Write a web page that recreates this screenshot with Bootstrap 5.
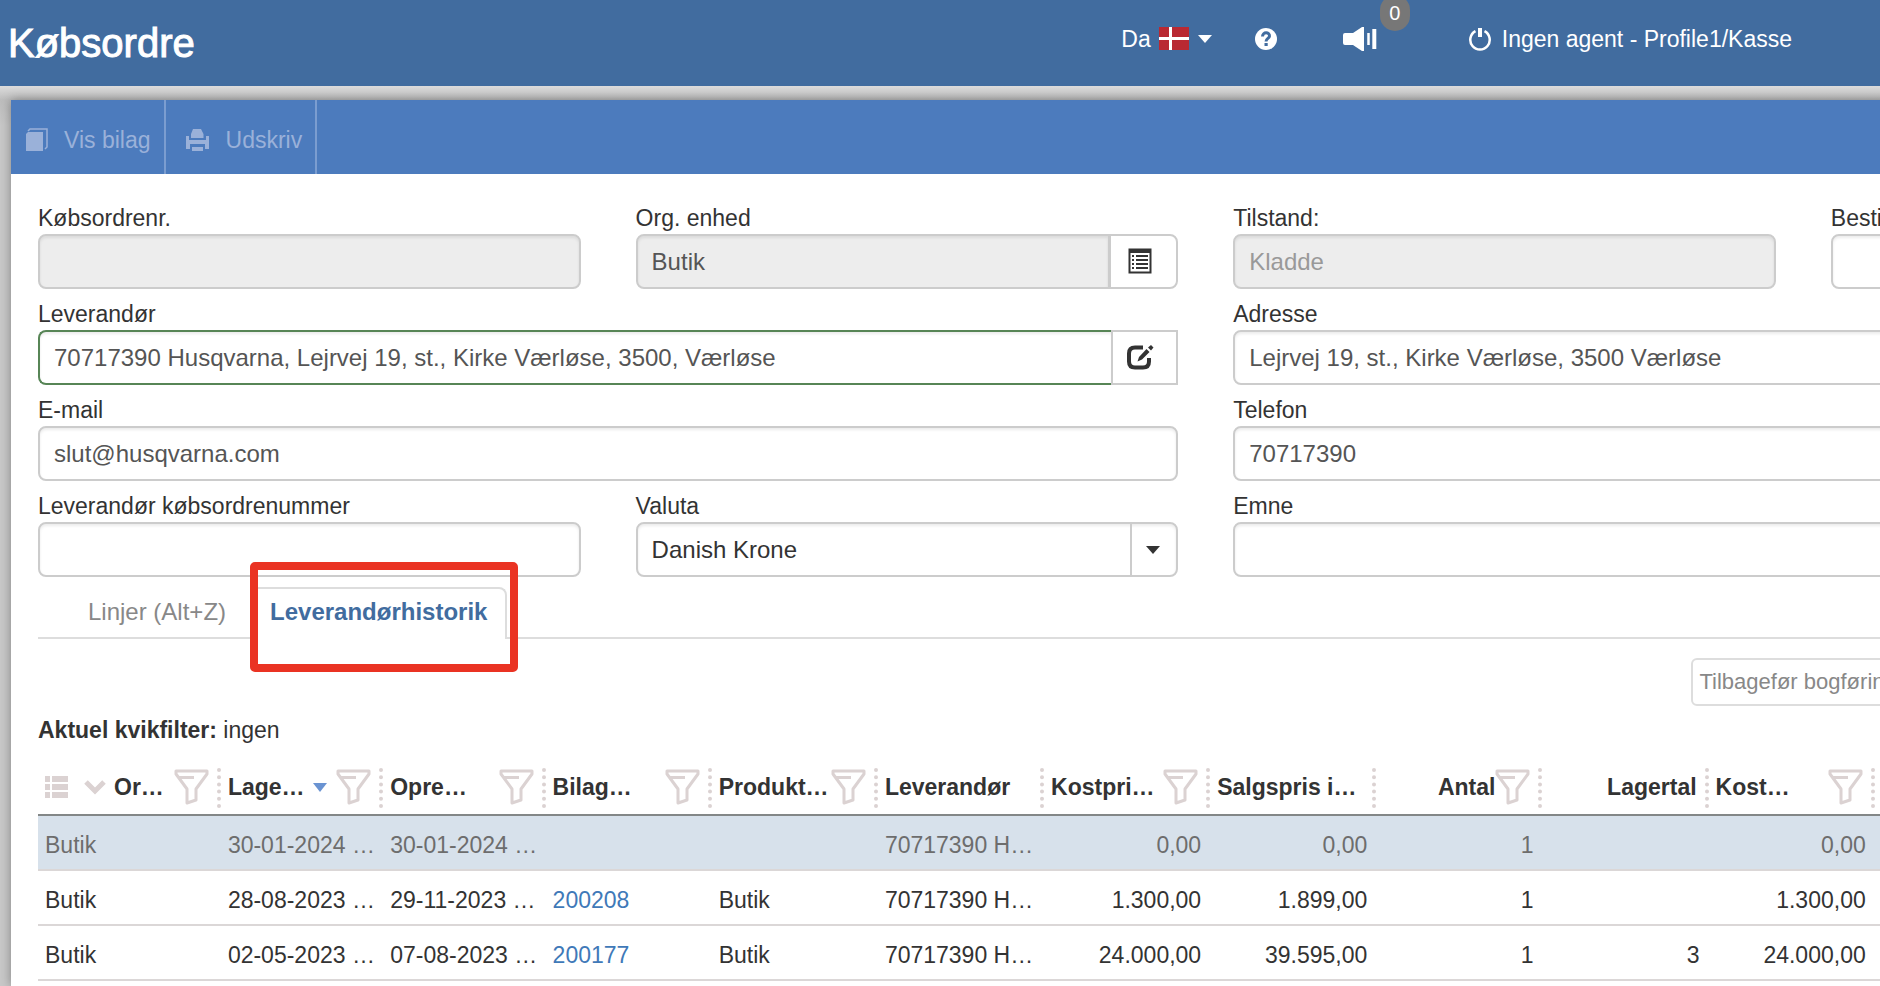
<!DOCTYPE html>
<html lang="da">
<head>
<meta charset="utf-8">
<meta name="viewport" content="width=device-width, initial-scale=1">
<title>Købsordre</title>
<link rel="stylesheet" href="https://cdn.jsdelivr.net/npm/bootstrap@5.3.0/dist/css/bootstrap.min.css">
<style>
  body { font-family: "Liberation Sans", Arial, sans-serif; font-size: 23px; line-height: 28px; color: #333; background: #c8c8c8; overflow-x: hidden; }
  .topbar { background: #416c9f; height: 86px; color: #fff; }
  .topbar a { color: #fff; text-decoration: none; }
  .page-title { font-size: 40px; line-height: 48px; -webkit-text-stroke: 1px #fff; }
  .top-links { margin-right: 88px; padding-bottom: 9px; }
  .lang { gap: 8px; margin-right: 42px; }
  .help { margin-right: 66px; }
  .sound { margin-right: 92px; }
  .agent { gap: 11px; }
  .notice-count { position: absolute; top: -32px; left: 37px; width: 30px; height: 36px; padding: 0; background: #777; font-size: 20px; font-weight: 400; line-height: 36px; border-radius: 15px; }
  .stage { padding: 14px 0 0 11px; background: linear-gradient(#dcdcdc, #bdbdbd 14px, #c8c8c8 40px); overflow: hidden; }
  .sheet { width: 127.9%; min-height: calc(100vh - 100px); background: #fff; box-shadow: 0 0 10px rgba(0,0,0,.35); }
  .toolstrip { background: #4c7bbd; height: 74px; }
  .tool { border: 0; border-right: 2px solid #7b9dd0; padding: 6px 13px 0 15px; font-size: 23px; }
  .tool.btn:disabled { opacity: 1; color: #9ab1d9; border-color: #7b9dd0; }
  .fields { padding-top: 29px; }
  .fcell { padding: 0 28px 0 27px; height: 96px; }
  .fcell label { display: block; line-height: 31px; }
  .form-control, .side-btn { height: 55px; font-size: 24px; border: 2px solid #ccc; border-radius: 8px; color: #555; }
  .form-control { padding: 0 14px; box-shadow: inset 0 2px 3px rgba(0,0,0,.08); }
  .form-control:disabled { background: #ededed; }
  .form-control.muted-value { color: #999; }
  .side-btn { width: 69px; background: #fff; padding: 0 8px 5px 0; color: #333; }
  .supplier .form-control { border-color: #578556; border-right-width: 0; }
  .supplier .side-btn { border-radius: 0; margin: 0; width: 67px; }
  .picker { position: relative; }
  .picker select { appearance: none; background: #fff; color: #333; }
  .picker .arrow { position: absolute; right: 0; top: 0; width: 48px; height: 55px; border-left: 2px solid #ccc; pointer-events: none; }
  .tabrow { margin: 0 27px; border-bottom: 2px solid #ddd; height: 52px; }
  .tabrow .nav-link { height: 52px; padding: 0 18px; line-height: 46px; font-size: 24px; color: #888; border: 2px solid transparent; border-bottom: 0; border-radius: 8px 8px 0 0; }
  .tabrow .nav-link.first { margin: 0 4px 0 30px; }
  .tabrow .nav-link.active { color: #416c9f; font-weight: 700; border-color: #ddd; background: #fff; }
  .highlight { position: absolute; top: -25px; left: 0; right: -11px; height: 110px; border: 8px solid #ea3323; border-radius: 5px; pointer-events: none; }
  .actions { padding-top: 19px; margin-left: 70.3%; }
  .actions .btn { height: 48px; padding: 0 6px; font-size: 22px; line-height: 44px; color: #888; border: 2px solid #ddd; border-radius: 6px; background: #fff; }
  .filterline { padding: 10px 27px 0; }
  .grid-wrap { padding-left: 27px; margin-top: 24px; }
  .history { table-layout: fixed; width: 100%; margin: 0; color: #333; }
  .history th, .history td { border: 0; white-space: nowrap; overflow: hidden; }
  .history th { height: 47px; padding: 0 0 0 6px; position: relative; vertical-align: top; }
  .history th::after { content: ""; position: absolute; right: 1px; top: 0; height: 40px; border-right: 4px dotted #dbd2d2; }
  .history thead { border-bottom: 2px solid #838787; }
  .history td { height: 55px; padding: 4px 6px 0; vertical-align: middle; border-bottom: 2px solid #dbd7d7; }
  .history td.n { text-align: right; padding-right: 10px; }
  .history th:first-child, .history td:first-child { padding-left: 7px; }
  .history tr.chosen td { background: #d7e1eb; color: #6d6d6d; }
  .history a { color: #4079b8; text-decoration: none; }
  .hcell { padding-right: 13px; height: 38px; }
  .funnel { width: 35px; height: 36px; margin-left: auto; flex: none; }
  .toright { margin-left: auto; }
</style>
</head>
<body>
<svg width="0" height="0" class="d-none">
  <symbol id="funnel" viewBox="0 0 35 36"><path d="M2 2H33V5L22 20V31L13 34V20L2 5Z" fill="none" stroke="#dbd2d2" stroke-width="3" stroke-linejoin="round"/><path d="M5 8.500H20" stroke="#dbd2d2" stroke-width="3"/></symbol>
</svg>
<header class="topbar d-flex align-items-center justify-content-between ps-2">
  <h1 class="page-title fw-normal m-0">Købsordre</h1>
  <nav class="top-links d-flex align-items-center">
    <a href="#" class="lang d-flex align-items-center">Da
      <svg width="30" height="23" viewBox="0 0 30 23"><rect width="30" height="23" fill="#b92932"/><path d="M11.500 0V23M0 11.500H30" stroke="#fff" stroke-width="3"/></svg>
      <svg width="16" height="8" viewBox="0 0 16 8"><path d="M1 0H15L8 8Z" fill="#fff"/></svg></a>
    <a href="#" class="help d-flex" aria-label="Hjælp"><svg width="22" height="22" viewBox="0 0 22 22"><circle cx="11" cy="11" r="11" fill="#fff"/><path d="M7.500 8.500C7.500 3.700 14.800 3.700 14.500 8.200C14.300 10.500 11 10.500 11 13.500" fill="none" stroke="#416c9f" stroke-width="3"/><rect x="9.500" y="15" width="3.200" height="3" fill="#416c9f"/></svg></a>
    <a href="#" class="sound d-flex position-relative" aria-label="Beskeder"><svg width="34" height="24" viewBox="0 0 34 24"><path d="M2 6H10L19 0H21V24H19L10 18H2Q0 18 0 16V8Q0 6 2 6Z" fill="#fff"/><path d="M25.500 6V18" stroke="#fff" stroke-width="2.500"/><path d="M31.300 2V22" stroke="#fff" stroke-width="4"/></svg><span class="badge notice-count">0</span></a>
    <a href="#" class="agent d-flex align-items-center"><svg width="22" height="24" viewBox="0 0 22 24"><path d="M6.500 4.200A9.700 9.700 0 1 0 15.500 4.200" fill="none" stroke="#fff" stroke-width="2.500"/><path d="M11 1V10" stroke="#fff" stroke-width="4"/></svg>Ingen agent - Profile1/Kasse</a>
  </nav>
</header>
<div class="stage">
<main class="sheet">
  <div class="toolstrip d-flex">
    <button class="btn tool rounded-0 d-flex align-items-center" disabled><svg class="me-3" width="22" height="24" viewBox="0 0 22 24"><path d="M0 6L2 4H17V23H0Z" fill="#9ab1d9"/><path d="M2 3L4 1H21V19L19 21" fill="none" stroke="#9ab1d9" stroke-width="1.500"/></svg>Vis bilag</button>
    <button class="btn tool rounded-0 d-flex align-items-center" disabled><svg class="me-3" width="29" height="24" viewBox="-5 0 29 24"><path d="M7 1H15L17.500 6V10H5V6ZM0 8H3V12H20V8H23V21H19V16H4V21H0ZM6 19H17V23H6Z" fill="#9ab1d9"/></svg>Udskriv</button>
  </div>
  <form class="fields row g-0">
    <div class="fcell col-3"><label for="nr">Købsordrenr.</label><input id="nr" class="form-control" disabled></div>
    <div class="fcell col-3"><label for="org">Org. enhed</label><div class="input-group"><input id="org" class="form-control" value="Butik" disabled><button type="button" class="btn side-btn" aria-label="Vælg enhed"><svg width="24" height="26" viewBox="0 0 24 26"><path d="M1.500 1.500H22.500V24.500H1.500Z" fill="none" stroke="#333" stroke-width="2"/><path d="M1 1H23V5H1Z" fill="#333"/><path d="M4 8H6M4 12H6M4 16H6M4 20H6M8 8H20M8 12H20M8 16H20M8 20H20" stroke="#333" stroke-width="2"/></svg></button></div></div>
    <div class="fcell col-3"><label for="state">Tilstand:</label><input id="state" class="form-control muted-value" value="Kladde" disabled></div>
    <div class="fcell col-3"><label for="ordered">Bestillingsdato</label><input id="ordered" class="form-control"></div>
    <div class="fcell col-6"><label for="sup">Leverandør</label><div class="input-group supplier"><input id="sup" class="form-control" value="70717390 Husqvarna, Lejrvej 19, st., Kirke Værløse, 3500, Værløse"><button type="button" class="btn side-btn" aria-label="Rediger leverandør"><svg width="27" height="26" viewBox="0 0 27 26"><path d="M16 3.500H8Q2 3.500 2 9.500V17.500Q2 23.500 8 23.500H16Q22 23.500 22 17.500V14" fill="none" stroke="#333" stroke-width="4"/><path d="M10.500 17.500L12 13L19.500 5L22.500 8L15 15.500ZM21 3.500L24 1L26.500 3.500L24 6.500Z" fill="#333"/></svg></button></div></div>
    <div class="fcell col-6"><label for="adr">Adresse</label><input id="adr" class="form-control" value="Lejrvej 19, st., Kirke Værløse, 3500 Værløse"></div>
    <div class="fcell col-6"><label for="mail">E-mail</label><input id="mail" class="form-control" value="slut@husqvarna.com"></div>
    <div class="fcell col-6"><label for="tel">Telefon</label><input id="tel" class="form-control" value="70717390"></div>
    <div class="fcell col-3"><label for="supno">Leverandør købsordrenummer</label><input id="supno" class="form-control"></div>
    <div class="fcell col-3"><label for="cur">Valuta</label><div class="picker"><select id="cur" class="form-control"><option>Danish Krone</option></select><span class="arrow d-flex align-items-center justify-content-center"><svg class="me-1" width="14" height="8" viewBox="0 0 14 8"><path d="M0 0H14L7 8Z" fill="#333"/></svg></span></div></div>
    <div class="fcell col-6"><label for="subj">Emne</label><input id="subj" class="form-control"></div>
  </form>
  <ul class="nav tabrow flex-nowrap">
    <li class="nav-item"><a class="nav-link first" href="#">Linjer (Alt+Z)</a></li>
    <li class="nav-item position-relative"><a class="nav-link active" href="#">Leverandørhistorik</a><span class="highlight"></span></li>
  </ul>
  <div class="actions"><button class="btn">Tilbagefør bogføring</button></div>
  <p class="filterline m-0"><strong>Aktuel kvikfilter:</strong> ingen</p>
  <div class="grid-wrap">
  <table class="history">
    <colgroup><col style="width:7.78%"><col style="width:6.87%"><col style="width:6.87%"><col style="width:7.03%"><col style="width:7.03%"><col style="width:7.03%"><col style="width:7.03%"><col style="width:7.03%"><col style="width:7.03%"><col style="width:7.03%"><col style="width:7.03%"><col></colgroup>
    <thead><tr>
      <th><div class="hcell d-flex align-items-center"><svg width="23" height="22" viewBox="0 0 23 22"><path d="M0 3H5M7 3H23M0 11H5M7 11H23M0 19H5M7 19H23" stroke="#dbd2d2" stroke-width="6"/></svg><svg class="ms-3 me-2" width="22" height="18" viewBox="0 0 22 18"><path d="M2 4L11 13L20 4" fill="none" stroke="#dbd2d2" stroke-width="5"/></svg>Or…<svg class="funnel"><use href="#funnel"/></svg></div></th>
      <th><div class="hcell d-flex align-items-center">Lage…<svg class="ms-2" width="14" height="9" viewBox="0 0 14 9"><path d="M0 0H14L7 9Z" fill="#6a93d2"/></svg><svg class="funnel"><use href="#funnel"/></svg></div></th>
      <th><div class="hcell d-flex align-items-center">Opre…<svg class="funnel"><use href="#funnel"/></svg></div></th>
      <th><div class="hcell d-flex align-items-center">Bilag…<svg class="funnel"><use href="#funnel"/></svg></div></th>
      <th><div class="hcell d-flex align-items-center">Produkt…<svg class="funnel"><use href="#funnel"/></svg></div></th>
      <th><div class="hcell d-flex align-items-center">Leverandør</div></th>
      <th><div class="hcell d-flex align-items-center">Kostpri…<svg class="funnel"><use href="#funnel"/></svg></div></th>
      <th><div class="hcell d-flex align-items-center">Salgspris i…</div></th>
      <th><div class="hcell d-flex align-items-center"><span class="toright">Antal</span><svg class="funnel ms-0"><use href="#funnel"/></svg></div></th>
      <th><div class="hcell d-flex align-items-center"><span class="toright">Lagertal</span></div></th>
      <th><div class="hcell d-flex align-items-center">Kost…<svg class="funnel"><use href="#funnel"/></svg></div></th>
      <th></th>
    </tr></thead>
    <tbody>
      <tr class="chosen"><td>Butik</td><td>30-01-2024 …</td><td>30-01-2024 …</td><td></td><td></td><td>70717390 H…</td><td class="n">0,00</td><td class="n">0,00</td><td class="n">1</td><td class="n"></td><td class="n">0,00</td><td></td></tr>
      <tr><td>Butik</td><td>28-08-2023 …</td><td>29-11-2023 …</td><td><a href="#">200208</a></td><td>Butik</td><td>70717390 H…</td><td class="n">1.300,00</td><td class="n">1.899,00</td><td class="n">1</td><td class="n"></td><td class="n">1.300,00</td><td></td></tr>
      <tr><td>Butik</td><td>02-05-2023 …</td><td>07-08-2023 …</td><td><a href="#">200177</a></td><td>Butik</td><td>70717390 H…</td><td class="n">24.000,00</td><td class="n">39.595,00</td><td class="n">1</td><td class="n">3</td><td class="n">24.000,00</td><td></td></tr>
    </tbody>
  </table>
  </div>
</main>
</div>
<script src="https://cdn.jsdelivr.net/npm/bootstrap@5.3.0/dist/js/bootstrap.bundle.min.js"></script>
</body>
</html>
